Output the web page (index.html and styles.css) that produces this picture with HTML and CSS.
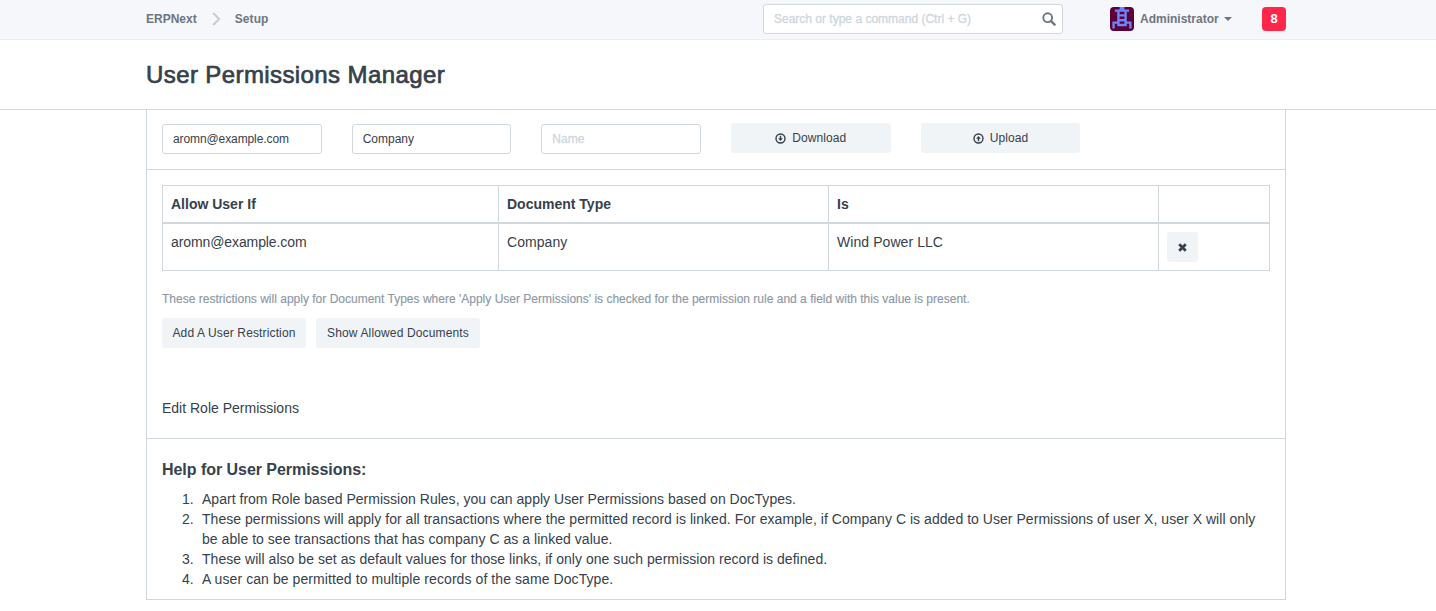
FILE: index.html
```html
<!DOCTYPE html>
<html lang="en">
<head>
<meta charset="utf-8">
<title>User Permissions Manager</title>
<link rel="stylesheet" href="styles.css">
</head>
<body>
<header class="navbar">
  <div class="container navbar-inner">
    <nav class="breadcrumb">
      <a class="crumb">ERPNext</a>
      <svg class="chevron" width="9" height="14" viewBox="0 0 9 14"><path d="M1.2 1 L7.2 7 L1.2 13" fill="none" stroke="#c3ccd5" stroke-width="1.9"/></svg>
      <a class="crumb crumb-setup">Setup</a>
    </nav>
    <div class="search">
      <span class="search-text">Search or type a command (Ctrl + G)</span>
      <svg class="search-icon" width="14" height="14" viewBox="0 0 14 14"><circle cx="5.7" cy="5.7" r="4.4" fill="none" stroke="#6c7680" stroke-width="1.9"/><path d="M9 9 L12.6 12.6" stroke="#6c7680" stroke-width="2.4" stroke-linecap="round"/></svg>
    </div>
    <div class="user">
      <svg class="avatar" width="24" height="24" viewBox="0 0 10 10"><rect width="10" height="10" fill="#5b0039"/><path fill="#6f83fb" d="M4 0h2v1h-2zM2 1h6v1h-6zM3 2h1v5h-1zM6 2h1v5h-1zM4 3h2v1h-2zM4 5h2v1h-2zM1 6h2v1h-2zM7 6h2v1h-2zM3 7h4v1h-4zM1 7h1v2h-1zM8 7h1v2h-1z"/></svg>
      <span class="user-name">Administrator</span>
      <span class="caret"></span>
    </div>
    <span class="badge">8</span>
  </div>
</header>
<div class="page-head"><div class="container"><h1 class="title">User Permissions Manager</h1></div></div>
<main class="container panel">
  <section class="filters">
    <div class="field"><span class="field-email">aromn@example.com</span></div>
    <div class="field">Company</div>
    <div class="field placeholder">Name</div>
    <button class="btn"><svg class="btn-icon" width="11" height="11" viewBox="0 0 11 11"><circle cx="5.5" cy="5.5" r="4.5" fill="none" stroke="#36414c" stroke-width="1.4"/><path d="M4.8 2.8h1.4v2.4h1.700L5.500 7.900 3.100 5.200h1.700z" fill="#36414c"/></svg><span class="btn-text">Download</span></button>
    <button class="btn"><svg class="btn-icon" width="11" height="11" viewBox="0 0 11 11"><circle cx="5.5" cy="5.5" r="4.5" fill="none" stroke="#36414c" stroke-width="1.4"/><path d="M4.800 8.200h1.400v-2.400h1.700L5.500 3.100 3.100 5.800h1.700z" fill="#36414c"/></svg><span class="btn-text">Upload</span></button>
  </section>
  <section class="rules">
    <table class="grid">
      <colgroup><col class="c1"><col class="c2"><col class="c2"><col class="c3"></colgroup>
      <thead><tr><th>Allow User If</th><th>Document Type</th><th>Is</th><th></th></tr></thead>
      <tbody><tr><td><span class="cell-email">aromn@example.com</span></td><td><span class="cell-company">Company</span></td><td><span class="cell-company">Wind Power LLC</span></td><td><button class="btn btn-remove"><svg width="9" height="9" viewBox="0 0 9 9"><path d="M1.200 1.200 L7.800 7.800 M7.800 1.200 L1.200 7.800" stroke="#36414c" stroke-width="2.700"/></svg></button></td></tr></tbody>
    </table>
    <p class="note">These restrictions will apply for Document Types where 'Apply User Permissions' is checked for the permission rule and a field with this value is present.</p>
    <div class="actions"><button class="btn btn-add">Add A User Restriction</button><button class="btn btn-show">Show Allowed Documents</button></div>
    <a class="edit-link">Edit Role Permissions</a>
  </section>
  <section class="help">
    <h2 class="help-title">Help for User Permissions:</h2>
    <ol class="help-list">
      <li class="item-short">Apart from Role based Permission Rules, you can apply User Permissions based on DocTypes.</li>
      <li class="item-long">These permissions will apply for all transactions where the permitted record is linked. For example, if Company C is added to User Permissions of user X, user X will only<br>be able to see transactions that has company C as a linked value.</li>
      <li class="item-long">These will also be set as default values for those links, if only one such permission record is defined.</li>
      <li class="item-last">A user can be permitted to multiple records of the same DocType.</li>
    </ol>
  </section>
</main>
</body>
</html>
```
FILE: styles.css
```css
* { box-sizing: border-box; }
body { margin: 0; background: #fff; color: #36414c; font: 14px/20px "Liberation Sans", Arial, sans-serif; white-space: nowrap; }
.container { width: 1140px; margin-left: 146px; }
.navbar { height: 40px; background: #f5f7fa; border-bottom: 1px solid #ebeef1; }
.navbar-inner { display: flex; height: 38px; align-items: center; font-size: 12px; }
.breadcrumb { width: 617px; display: flex; align-items: center; color: #6c7680; font-weight: bold; }
.chevron { margin: 0 14px 0 15px; }
.crumb-setup { letter-spacing: 0.1px; }
.search { width: 300px; height: 30px; display: flex; align-items: center; justify-content: space-between; padding: 0 6px 0 10px; background: #fff; border: 1px solid #d1d8dd; border-radius: 3px; color: #ced6dd; }
.search-text { -webkit-text-stroke: 0.3px #ced6dd; }
.user { display: flex; align-items: center; margin-left: 47px; width: 152px; font-weight: bold; color: #6c7680; }
.avatar { border-radius: 4px; margin-right: 6px; }
.caret { border: 4px solid transparent; border-top-color: #6c7680; border-bottom: 0; margin-left: 5px; }
.badge { width: 24px; height: 24px; border-radius: 4px; background: #ff2849; color: #fff; font-size: 13px; font-weight: bold; line-height: 24px; text-align: center; }
.page-head { height: 70px; border-bottom: 1px solid #d1d8dd; }
.title { margin: 0; padding-top: 19px; font-size: 24px; line-height: 32px; font-weight: normal; letter-spacing: 0.4px; -webkit-text-stroke: 0.7px #36414c; }
.panel { height: 490px; border: 1px solid #d1d8dd; border-top: 0; }
.filters { height: 60px; display: flex; gap: 30px; padding: 13px 15px 0; border-bottom: 1px solid #d1d8dd; font-size: 12px; }
.field { width: 159.66px; height: 30px; margin-top: 1px; padding: 0 10px; border: 1px solid #d1d8dd; border-radius: 3px; line-height: 28px; }
.field-email { letter-spacing: -0.1px; }
.placeholder { color: #ced6dd; -webkit-text-stroke: 0.3px #ced6dd; }
.btn { display: flex; align-items: center; justify-content: center; height: 30px; width: 159.66px; padding: 0; border: 0; border-radius: 3px; background: #f0f4f7; color: #36414c; font: 12px/18px "Liberation Sans", Arial, sans-serif; }
.btn-icon { margin-right: 6px; }
.btn-text { letter-spacing: 0.1px; }
.rules { height: 269px; padding: 15px 15px 0; border-bottom: 1px solid #d1d8dd; }
.grid { width: 1107px; border-collapse: collapse; table-layout: fixed; }
.c1 { width: 336px; }
.c2 { width: 330px; }
.c3 { width: 111px; }
.grid th, .grid td { border: 1px solid #d1d8dd; padding: 8px; text-align: left; vertical-align: top; }
.grid th { height: 37px; border-bottom-width: 2px; }
.grid td { height: 47px; }
.cell-email { letter-spacing: -0.1px; }
.cell-company { letter-spacing: 0.07px; }
.btn-remove { width: 31px; }
.note { margin: 18px 0 9px; font-size: 12px; line-height: 20px; letter-spacing: 0.007px; color: #8d99a6; -webkit-text-stroke: 0.15px #8d99a6; }
.actions { display: flex; gap: 10px; }
.btn-add { width: 144px; letter-spacing: 0.14px; }
.btn-show { width: 164px; letter-spacing: 0.14px; }
.edit-link { display: block; margin-top: 50px; }
.help { padding: 21px 15px 0; }
.help-title { margin: 0; font-size: 16px; line-height: 20px; letter-spacing: -0.04px; }
.help-list { margin: 9px 0 0; padding-left: 20px; list-style: none; counter-reset: item; }
.help-list li { counter-increment: item; padding-left: 20px; text-indent: -20px; }
.help-list li::before { content: counter(item) "."; display: inline-block; width: 20px; text-indent: 0; letter-spacing: 0; }
.item-short { letter-spacing: 0.02px; }
.item-long { letter-spacing: 0.04px; }
.item-last { letter-spacing: 0.08px; }
```
